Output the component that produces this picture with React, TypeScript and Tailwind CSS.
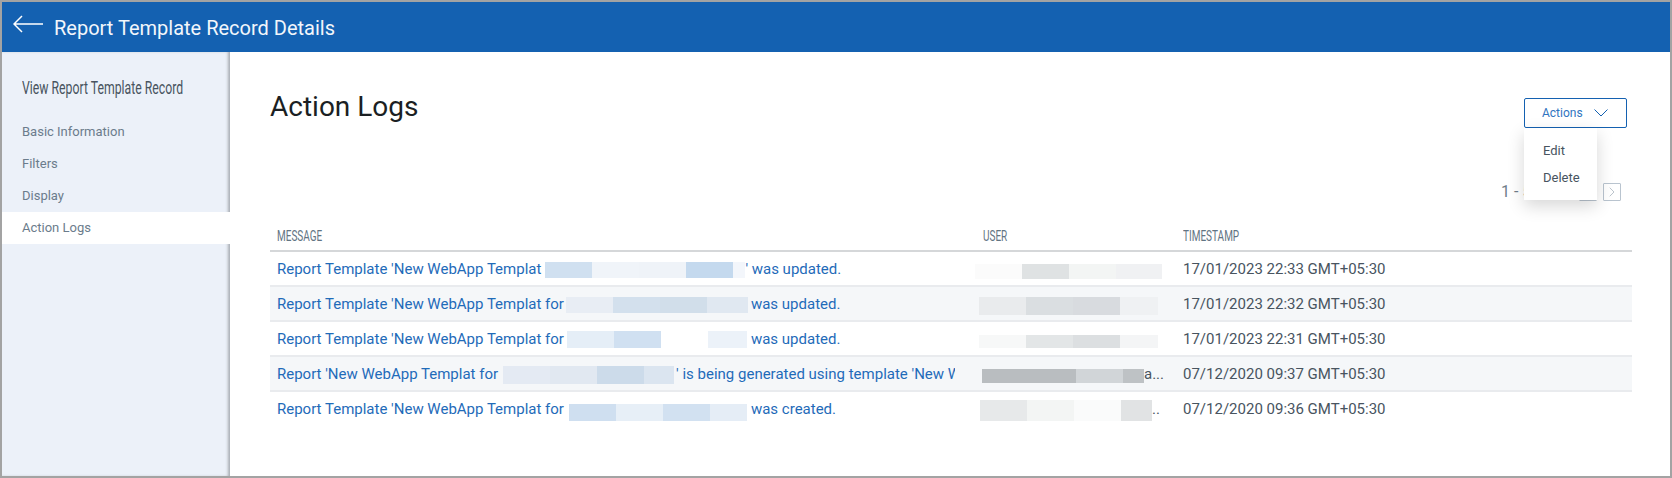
import React from "react";
import { ChevronRight } from "lucide-react";

interface Patch {
  w: number;
  color: string;
}

interface LogRow {
  before: string;
  after: string;
  patches: Patch[];
  gap: number;
  afterGap: number;
  patchH: number;
  patchTop: number;
  userLeft: number;
  userTop: number;
  userH: number;
  user: Patch[];
  userTail?: string;
  time: string;
}

const rows: LogRow[] = [
  {
    before: "Report Template 'New WebApp Templat",
    after: "' was updated.",
    gap: 4,
    afterGap: 0,
    patchH: 16,
    patchTop: 0,
    patches: [
      { w: 47, color: "#d0e0f0" },
      { w: 47, color: "#f0f4f9" },
      { w: 47, color: "#eff3f8" },
      { w: 47, color: "#c4d9ee" },
      { w: 12, color: "#f3f6fb" },
    ],
    userLeft: -8,
    userTop: 4,
    userH: 15,
    user: [
      { w: 47, color: "#fbfbfb" },
      { w: 47, color: "#dfe2e3" },
      { w: 47, color: "#f3f5f4" },
      { w: 46, color: "#f0f1f3" },
    ],
    time: "17/01/2023 22:33 GMT+05:30",
  },
  {
    before: "Report Template 'New WebApp Templat for",
    after: "was updated.",
    gap: 2,
    afterGap: 3,
    patchH: 16,
    patchTop: 0,
    patches: [
      { w: 47, color: "#e8edf4" },
      { w: 47, color: "#d3e0ed" },
      { w: 47, color: "#d1deea" },
      { w: 41, color: "#e0e8f1" },
    ],
    userLeft: -4,
    userTop: 3,
    userH: 18,
    user: [
      { w: 47, color: "#e9ebed" },
      { w: 47, color: "#dadee1" },
      { w: 47, color: "#d8dbdf" },
      { w: 38, color: "#eff1f3" },
    ],
    time: "17/01/2023 22:32 GMT+05:30",
  },
  {
    before: "Report Template 'New WebApp Templat for",
    after: "was updated.",
    gap: 3,
    afterGap: 4,
    patchH: 17,
    patchTop: 0,
    patches: [
      { w: 47, color: "#e5eef7" },
      { w: 47, color: "#d0e0f1" },
      { w: 47, color: "#ffffff" },
      { w: 39, color: "#ecf2f9" },
    ],
    userLeft: -4,
    userTop: 4,
    userH: 13,
    user: [
      { w: 47, color: "#f7f8f8" },
      { w: 47, color: "#e3e6e7" },
      { w: 47, color: "#dcdfe1" },
      { w: 38, color: "#f4f5f6" },
    ],
    time: "17/01/2023 22:31 GMT+05:30",
  },
  {
    before: "Report 'New WebApp Templat for",
    after: "' is being generated using template 'New WebApp Templat",
    gap: 5,
    afterGap: 2,
    patchH: 18,
    patchTop: 0,
    patches: [
      { w: 47, color: "#e4eaf3" },
      { w: 47, color: "#e1e8f1" },
      { w: 47, color: "#ccdbea" },
      { w: 30, color: "#dbe5f0" },
    ],
    userLeft: -1,
    userTop: 3,
    userH: 14,
    user: [
      { w: 47, color: "#b9bdc0" },
      { w: 47, color: "#b9bdc0" },
      { w: 47, color: "#d1d5d8" },
      { w: 21, color: "#bec2c5" },
    ],
    userTail: "a...",
    time: "07/12/2020 09:37 GMT+05:30",
  },
  {
    before: "Report Template 'New WebApp Templat for",
    after: "was created.",
    gap: 5,
    afterGap: 4,
    patchH: 17,
    patchTop: 6,
    patches: [
      { w: 47, color: "#cfdff0" },
      { w: 47, color: "#e7eff7" },
      { w: 47, color: "#d2e1f1" },
      { w: 37, color: "#e5edf6" },
    ],
    userLeft: -3,
    userTop: 2,
    userH: 21,
    user: [
      { w: 47, color: "#e7e9ea" },
      { w: 47, color: "#f3f5f4" },
      { w: 47, color: "#fafbfb" },
      { w: 31, color: "#e1e3e4" },
    ],
    userTail: "..",
    time: "07/12/2020 09:36 GMT+05:30",
  },
];

const sideItems = ["Basic Information", "Filters", "Display"];

// blurred-out redaction blocks in the table
const Redaction = ({ patches, height }: { patches: Patch[]; height: number }) => (
  <span className="flex shrink-0">
    {patches.map((p, i) => (
      <span key={i} style={{ width: p.w, height, backgroundColor: p.color }} />
    ))}
  </span>
);

export default function App() {
  return (
    <div className="w-[1672px] h-[478px] overflow-hidden border-2 border-[#a3a3a3] bg-white font-['Roboto',sans-serif] flex flex-col">
      {/* Title bar */}
      <header className="h-[50px] shrink-0 bg-[#1461b1] flex items-center pl-[11px] gap-[9px]">
        <svg className="-mt-[6px]" width="32" height="20" viewBox="0 0 32 20" fill="none" stroke="#ffffff" strokeWidth="1.5">
          <path d="M30 10H1M9 2L1 10l8 8" />
        </svg>
        <h1 className="mt-[1px] text-[20px] text-[#f2f6fb] leading-none">Report Template Record Details</h1>
      </header>

      <div className="flex flex-1 min-h-0">
        {/* Side nav */}
        <aside className="w-[228px] shrink-0 bg-[#ecf1f9] shadow-[inset_-3px_0_3px_-1px_#a9aeb4] pt-[26px]">
          <div className="pl-5 h-[20px] flex items-center text-[17.5px] text-[#48545f] whitespace-nowrap">
            <span className="inline-block scale-x-[0.7] origin-left">View Report Template Record</span>
          </div>
          <ul className="mt-[18px] text-[13px] text-[#6b7c8c]">
            {sideItems.map((item) => (
              <li key={item} className="h-8 pl-5 flex items-center">
                {item}
              </li>
            ))}
            <li className="h-8 pl-5 flex items-center bg-white">Action Logs</li>
          </ul>
        </aside>

        {/* Main panel */}
        <main className="relative flex-1 pl-10 pr-[38px] pt-[38px]">
          <div className="flex items-start justify-between">
            <h2 className="text-[28px] leading-[34px] text-[#1b1f23]">Action Logs</h2>
            <div className="relative mr-[5px] mt-[8px]">
              <button className="w-[103px] h-[30px] border border-[#1461b1] rounded-[2px] flex items-center pl-[17px] gap-[11px] text-[12px] text-[#2f74c0]">
                Actions
                <svg width="14" height="8" viewBox="0 0 14 8" fill="none" stroke="#1461b1" strokeWidth="1">
                  <path d="M0.5 0.5L7 7l6.5-6.5" />
                </svg>
              </button>
              {/* Open dropdown */}
              <div className="absolute z-10 top-[30px] left-0 w-[73px] h-[72px] bg-white shadow-[0_6px_16px_rgba(0,0,0,0.16)] pt-[9px] text-[13px] text-[#48545f]">
                <div className="h-[27px] pl-[19px] flex items-center">Edit</div>
                <div className="h-[27px] pl-[19px] flex items-center">Delete</div>
              </div>
            </div>
          </div>

          {/* Pagination, mostly hidden behind the menu */}
          <div className="flex justify-end items-center gap-[6px] mt-[55px] mr-[11px] h-[18px]">
            <span className="text-[16px] text-[#6f7d89] mr-[10px]">1 - 5 of 5</span>
            <span className="w-[18px] h-[18px] border-[1.5px] border-[#b9c4cf] rounded-[1px]" />
            <span className="w-[18px] h-[18px] border-[1.5px] border-[#b9c4cf] rounded-[1px] flex items-center justify-center">
              <ChevronRight size={20} strokeWidth={1} className="text-[#9aa7b3]" />
            </span>
          </div>

          {/* Log table */}
          <div className="mt-[18px] w-[1362px]">
            <div className="grid grid-cols-[713px_200px_1fr] h-[33px] pt-[4px] border-b-2 border-[#d5d7d9] text-[15.5px] text-[#627483]">
              <div className="pl-[7px] flex items-center"><span className="inline-block scale-x-[0.645] origin-left">MESSAGE</span></div>
              <div className="flex items-center"><span className="inline-block scale-x-[0.645] origin-left">USER</span></div>
              <div className="flex items-center"><span className="inline-block scale-x-[0.645] origin-left">TIMESTAMP</span></div>
            </div>
            {rows.map((row, i) => (
              <div
                key={i}
                className={`grid grid-cols-[713px_200px_1fr] h-[35px] items-center ${
                  i < rows.length - 1 ? "pt-[2px] border-b-2 border-[#e9ebee]" : ""
                } ${i % 2 === 1 ? "bg-[#f5f7f9]" : "bg-white"}`}
              >
                <div className="mr-[28px] pl-[7px] flex items-center overflow-hidden whitespace-nowrap text-[15px] text-[#1f6bb9]">
                  <span>{row.before}</span>
                  <span style={{ marginLeft: row.gap, marginRight: row.afterGap, marginTop: row.patchTop }}>
                    <Redaction patches={row.patches} height={row.patchH} />
                  </span>
                  <span>{row.after}</span>
                </div>
                <div className="flex items-center text-[15px] text-[#48545f]" style={{ marginLeft: row.userLeft }}>
                  <span style={{ marginTop: row.userTop }}>
                    <Redaction patches={row.user} height={row.userH} />
                  </span>
                  {row.userTail && <span>{row.userTail}</span>}
                </div>
                <div className="text-[15px] text-[#48545f] whitespace-nowrap">{row.time}</div>
              </div>
            ))}
          </div>
        </main>
      </div>
    </div>
  );
}
